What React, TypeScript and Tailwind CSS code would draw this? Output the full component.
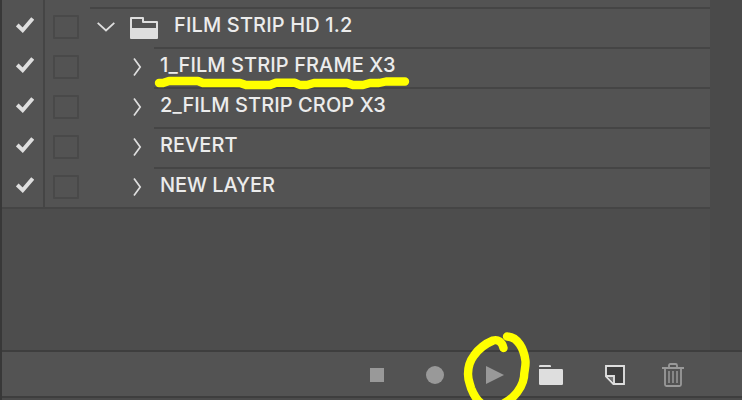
type Action = {
  name: string;
  spacing: string;
};

const actions: Action[] = [
  { name: '1_FILM STRIP FRAME X3', spacing: 'tracking-[0.09px]' },
  { name: '2_FILM STRIP CROP X3', spacing: 'tracking-[0.09px]' },
  { name: 'REVERT', spacing: 'tracking-[0.05px]' },
  { name: 'NEW LAYER', spacing: 'tracking-[-0.08px]' },
];

const Toggles = () => (
  <div className="flex shrink-0">
    <div className="w-[43px] border-r-2 border-[#454545] pl-[14px] pt-[10px]">
      <svg width="18" height="16" viewBox="0 0 18 16" fill="none">
        <path d="M1.2 8 6.7 13.2 16.7 1.5" stroke="#dedede" strokeWidth="3.9" />
      </svg>
    </div>
    <div className="pl-2 pt-2">
      <div className="h-6 w-[26px] rounded-[1px] border-2 border-[#494949]" />
    </div>
  </div>
);

const ActionRow = ({ name, spacing }: Action) => (
  <div className="flex h-10">
    <Toggles />
    <div className="w-[75px] shrink-0 pl-[54px] pt-[11px]">
      <svg width="9" height="18" viewBox="0 0 9 18" fill="none">
        <path d="M1 .5 7.2 9 1 17.5" stroke="#dedede" strokeWidth="1.7" />
      </svg>
    </div>
    <div className="grow border-t-2 border-[#454545] pl-[6px]">
      <span className={`block whitespace-nowrap pt-[4px] leading-6 ${spacing}`}>{name}</span>
    </div>
  </div>
);

const Footer = () => (
  <div className="flex h-[50px] shrink-0 flex-col bg-[#4b4b4b]">
    <div className="flex h-12 items-center border-y-2 border-[#3e3e3e] bg-[#535353] pt-[2px]">
      <div className="ml-[368px] size-[14px] bg-[#999]" />
      <div className="ml-[42px] size-[18px] rounded-full bg-[#999]" />
      <svg className="ml-[42px]" width="18" height="18" viewBox="0 0 18 18">
        <path d="M0 0 18 9 0 18Z" fill="#999" />
      </svg>
      <svg className="ml-[35px]" width="24" height="20" viewBox="0 0 24 20" fill="#dedede">
        <path d="M0 2V1.2Q0 0 1.2 0h9.6Q12 0 12 1.2V2Z" />
        <path d="M0 4h22.8Q24 4 24 5.2v13.6q0 1.2-1.2 1.2H1.2Q0 20 0 18.8Z" />
      </svg>
      <svg className="ml-[42px]" width="20" height="20" viewBox="0 0 20 20">
        <path d="M1 1h18v18H8.4L1 11.4Z" fill="#3e3e3e" stroke="#dedede" strokeWidth="1.9" />
        <path d="M1 11h8v8" fill="none" stroke="#dedede" strokeWidth="1.9" />
        <path d="M3.5 12h4.5v4.5Z" fill="#777" />
      </svg>
      <svg className="ml-[37px]" width="22" height="24" viewBox="0 0 22 24" fill="none" stroke="#999">
        <path d="M0 5h22M3 5v16.5Q3 23 4.5 23h13q1.5 0 1.5-1.5V5M7 4V2.5Q7 1 8.5 1h5Q15 1 15 2.5V4" strokeWidth="1.8" />
        <path d="M7 8v12M11 8v12M15 8v12" strokeWidth="1.5" />
      </svg>
    </div>
  </div>
);

// Hand drawn highlighter marks that sit on top of the panel
const Marker = () => (
  <svg
    className="pointer-events-none absolute inset-0"
    width="742"
    height="400"
    viewBox="0 0 742 400"
    fill="none"
    stroke="#ffff00"
    strokeWidth="8.4"
    strokeLinecap="round"
    strokeLinejoin="round"
  >
    <path d="M159 83H163L169 81H198L203 83H240L246 85H270L276 82.8H295L300 85H307L314 83H347L353 85H363L370 83H379L386 81.5H405" />
    <path d="M503.5 348C502 342 498 339 493 340.500C487 343 480 347 474 355.500C469 362 468 367 468 374C468 381 470 384 471 388C473 393 475 399 482 404C493 410 505 404 513 397C519 391 523 384 524 377C524 371 526 367 525.500 361C524 349 518 337 507 336.500" />
  </svg>
);

const App = () => {
  return (
    <div className="relative flex h-[400px] w-[742px] flex-col overflow-hidden border-l-2 border-[#383838] bg-[#4d4d4d] font-['Inter',sans-serif] text-[20px] font-medium text-[#ececec]">
      <div className="flex grow">
        <div className="w-[708px]">
          <div className="border-b-2 border-[#454545] bg-[#535353]">
            <div className="h-[7px] w-[43px] border-r-2 border-[#454545]" />
            <div className="flex h-10">
              <Toggles />
              <div className="w-[11px] shrink-0" />
              <div className="flex grow border-t-2 border-[#454545]">
                <svg className="ml-[7px] mt-[13px]" width="18" height="10" viewBox="0 0 18 10" fill="none">
                  <path d="M.7.8 9 8.5 17.3.8" stroke="#dedede" strokeWidth="1.8" />
                </svg>
                <svg className="ml-[15px] mt-2" width="28" height="22" viewBox="0 0 28 22">
                  <path d="M1 1h12v4h14v16H1Z" fill="none" stroke="#dedede" strokeWidth="2" strokeLinejoin="round" />
                  <path d="M1 11h26v10H1Z" fill="#dedede" />
                </svg>
                <span className="ml-4 whitespace-nowrap pt-[4px] leading-6 tracking-[0.14px]">
                  FILM STRIP HD 1.2
                </span>
              </div>
            </div>
            {actions.map((action) => (
              <ActionRow key={action.name} {...action} />
            ))}
          </div>
        </div>
        <div className="grow bg-[#4a4a4a]" />
      </div>
      <Footer />
      <div className="absolute inset-y-0 -left-[2px]">
        <Marker />
      </div>
    </div>
  );
};

export default App;
